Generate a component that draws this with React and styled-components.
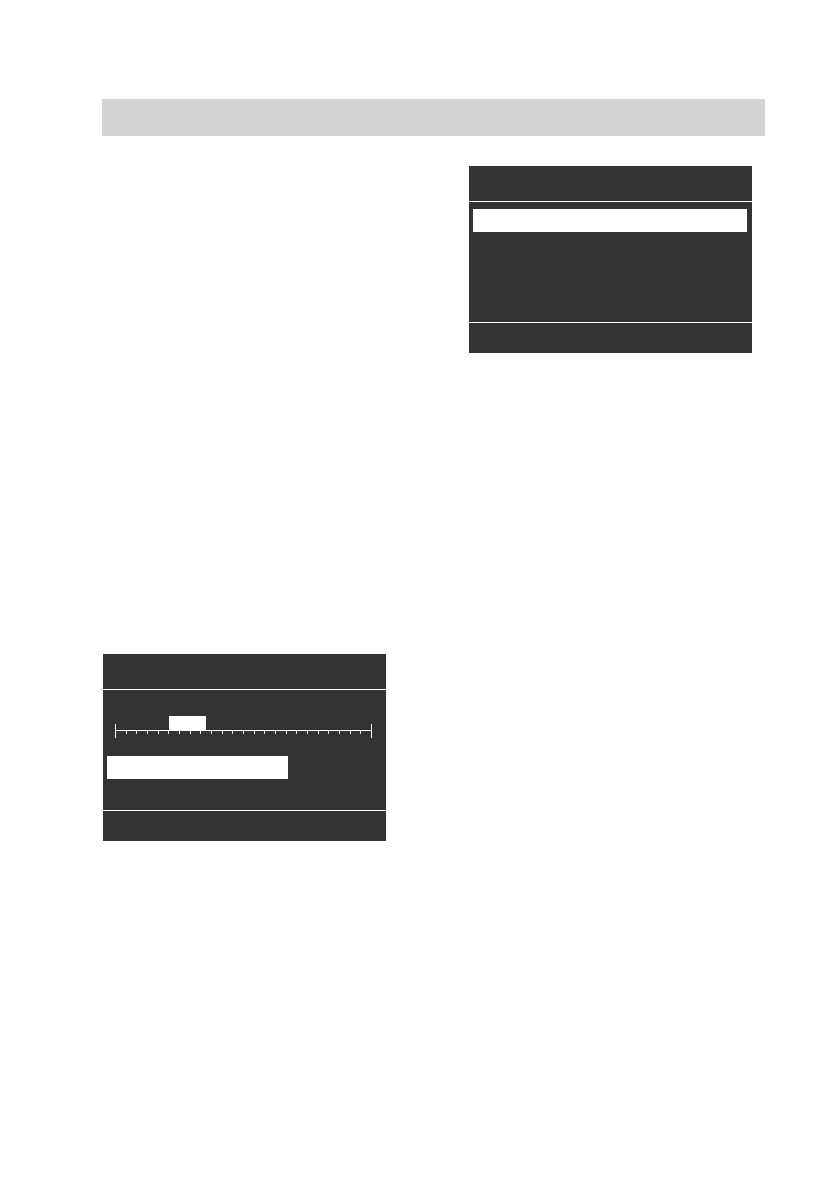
import styled, { createGlobalStyle } from "styled-components";

const GlobalStyle = createGlobalStyle`
  body {
    margin: 0;
    background: #ffffff;
    font-family: "Liberation Sans", Arial, sans-serif;
  }
`;

const TICKS = 24;

export default function App() {
  return (
    <>
      <GlobalStyle />
      <Page>
        <TitleBar />
        <Panel $offset={367} $top={30}>
          <Header />
          <Divider />
          <Body>
            <ListItem />
          </Body>
          <Divider />
          <Footer />
        </Panel>
        <Panel $offset={1} $top={301}>
          <Header />
          <Divider />
          <Body>
            <RulerWrap>
              <Ruler />
              <Marker />
            </RulerWrap>
            <ValueBar />
          </Body>
          <Divider />
          <Footer />
        </Panel>
      </Page>
    </>
  );
}

function Ruler() {
  const width = 257;
  const step = (width - 1) / TICKS;
  const ticks = [];
  for (let i = 1; i < TICKS; i++) {
    const x = 0.5 + i * step;
    ticks.push(<line key={i} x1={x} y1={7} x2={x} y2={11} />);
  }
  return (
    <svg width={width} height={16} viewBox={`0 0 ${width} 16`}>
      <g stroke="#ffffff" strokeWidth="1" shapeRendering="crispEdges">
        <line x1={0.5} y1={7.5} x2={width - 0.5} y2={7.5} />
        <line x1={0.5} y1={1} x2={0.5} y2={15} />
        <line x1={width - 0.5} y1={1} x2={width - 0.5} y2={15} />
        {ticks}
      </g>
    </svg>
  );
}

const Page = styled.div`
  display: flex;
  flex-direction: column;
  padding: 99px 74px 0 102px;
  height: 1191px;
  box-sizing: border-box;
`;

const TitleBar = styled.div`
  height: 37px;
  background: #d3d3d3;
`;

const Panel = styled.section`
  display: flex;
  flex-direction: column;
  width: 283px;
  margin-left: ${(p) => p.$offset}px;
  margin-top: ${(p) => p.$top}px;
  background: #333333;
`;

const Header = styled.div`
  height: 35px;
`;

const Divider = styled.div`
  height: 1px;
  background: #ffffff;
`;

const Body = styled.div`
  display: flex;
  flex-direction: column;
  height: 120px;
`;

const Footer = styled.div`
  height: 30px;
`;

const ListItem = styled.div`
  margin: 7px 5px 0 4px;
  height: 23px;
  background: #ffffff;
`;

const RulerWrap = styled.div`
  position: relative;
  margin: 33px 0 0 12px;
  width: 257px;
  height: 16px;

  svg {
    display: block;
  }
`;

const Marker = styled.div`
  position: absolute;
  left: 54px;
  top: -7px;
  width: 37px;
  height: 14px;
  background: #ffffff;
`;

const ValueBar = styled.div`
  margin: 17px 0 0 4px;
  width: 181px;
  height: 23px;
  background: #ffffff;
`;
